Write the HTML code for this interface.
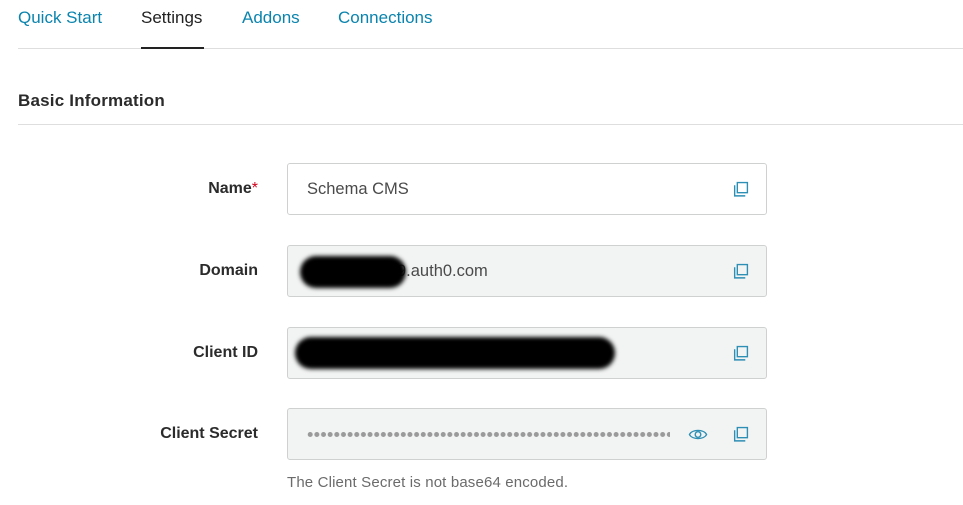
<!DOCTYPE html>
<html><head><meta charset="utf-8"><style>
body{margin:0;width:963px;height:505px;background:#fff;font-family:"Liberation Sans",sans-serif;position:relative;overflow:hidden}
.a{position:absolute}
.tab{position:absolute;top:8px;font-size:17px;color:#0a84ae}
.lbl{position:absolute;right:705px;font-size:16px;font-weight:bold;color:#2b2b2b}
.inp{position:absolute;left:287px;width:478px;height:50px;border:1px solid #cfd1d1;border-radius:3px;background:#f2f3f3}
.val{position:absolute;left:19px;top:16px;font-size:16.5px;color:#4a4a4a}
.cp{position:absolute;left:444px;top:17px}
</style></head><body>
<div class="tab" style="left:18px">Quick Start</div>
<div class="tab" style="left:141px;color:#222">Settings</div>
<div class="tab" style="left:242px">Addons</div>
<div class="tab" style="left:338px">Connections</div>
<div class="a" style="left:18px;top:48px;width:945px;height:1px;background:#dedede"></div>
<div class="a" style="left:141px;top:47px;width:63px;height:2px;background:#222"></div>
<div class="a" style="left:18px;top:91px;font-size:17px;font-weight:bold;color:#2b2b2b;letter-spacing:.2px">Basic Information</div>
<div class="a" style="left:18px;top:124px;width:945px;height:1px;background:#dedede"></div>

<div class="lbl" style="top:180px">Name<span style="color:#d0021b;font-weight:normal">*</span></div>
<div class="inp" style="top:163px;background:#fff"><div class="val">Schema CMS</div>
<svg class="cp" width="17" height="17" viewBox="0 0 16 16"><path d="M5 1.5h9.5v9.5H5z" fill="none" stroke="#2e8fb4" stroke-width="1.3"/><path d="M2.5 4v10h10" fill="none" stroke="#2e8fb4" stroke-width="1.3"/></svg></div>

<div class="lbl" style="top:262px">Domain</div>
<div class="inp" style="top:245px"><div class="val" style="left:109px">9.auth0.com</div>
<div class="a" style="left:12px;top:10px;width:106px;height:32px;background:#000;border-radius:16px;filter:blur(2px)"></div>
<svg class="cp" width="17" height="17" viewBox="0 0 16 16"><path d="M5 1.5h9.5v9.5H5z" fill="none" stroke="#2e8fb4" stroke-width="1.3"/><path d="M2.5 4v10h10" fill="none" stroke="#2e8fb4" stroke-width="1.3"/></svg></div>

<div class="lbl" style="top:344px">Client ID</div>
<div class="inp" style="top:327px">
<div class="a" style="left:7px;top:9px;width:320px;height:32px;background:#000;border-radius:16px;filter:blur(2px)"></div>
<svg class="cp" width="17" height="17" viewBox="0 0 16 16"><path d="M5 1.5h9.5v9.5H5z" fill="none" stroke="#2e8fb4" stroke-width="1.3"/><path d="M2.5 4v10h10" fill="none" stroke="#2e8fb4" stroke-width="1.3"/></svg></div>

<div class="lbl" style="top:425px">Client Secret</div>
<div class="inp" style="top:408px">
<svg class="a" style="left:19px;top:22px" width="363" height="7"><defs><pattern id="d" width="6.65" height="7" patternUnits="userSpaceOnUse"><circle cx="3.2" cy="3.5" r="2.5" fill="#9a9a9a"/></pattern></defs><rect width="363" height="7" fill="url(#d)"/></svg>
<svg class="a" style="left:400px;top:18px" width="20" height="15" viewBox="0 0 18 14"><path d="M1 7C3.5 2 14.5 2 17 7C14.5 12 3.5 12 1 7z" fill="none" stroke="#2e8fb4" stroke-width="1.3"/><circle cx="9" cy="7" r="2.6" fill="none" stroke="#2e8fb4" stroke-width="1.3"/></svg>
<svg class="cp" width="17" height="17" viewBox="0 0 16 16"><path d="M5 1.5h9.5v9.5H5z" fill="none" stroke="#2e8fb4" stroke-width="1.3"/><path d="M2.5 4v10h10" fill="none" stroke="#2e8fb4" stroke-width="1.3"/></svg></div>
<div class="a" style="left:287px;top:474px;font-size:15px;letter-spacing:.15px;color:#6b6b6b">The Client Secret is not base64 encoded.</div>
</body></html>
